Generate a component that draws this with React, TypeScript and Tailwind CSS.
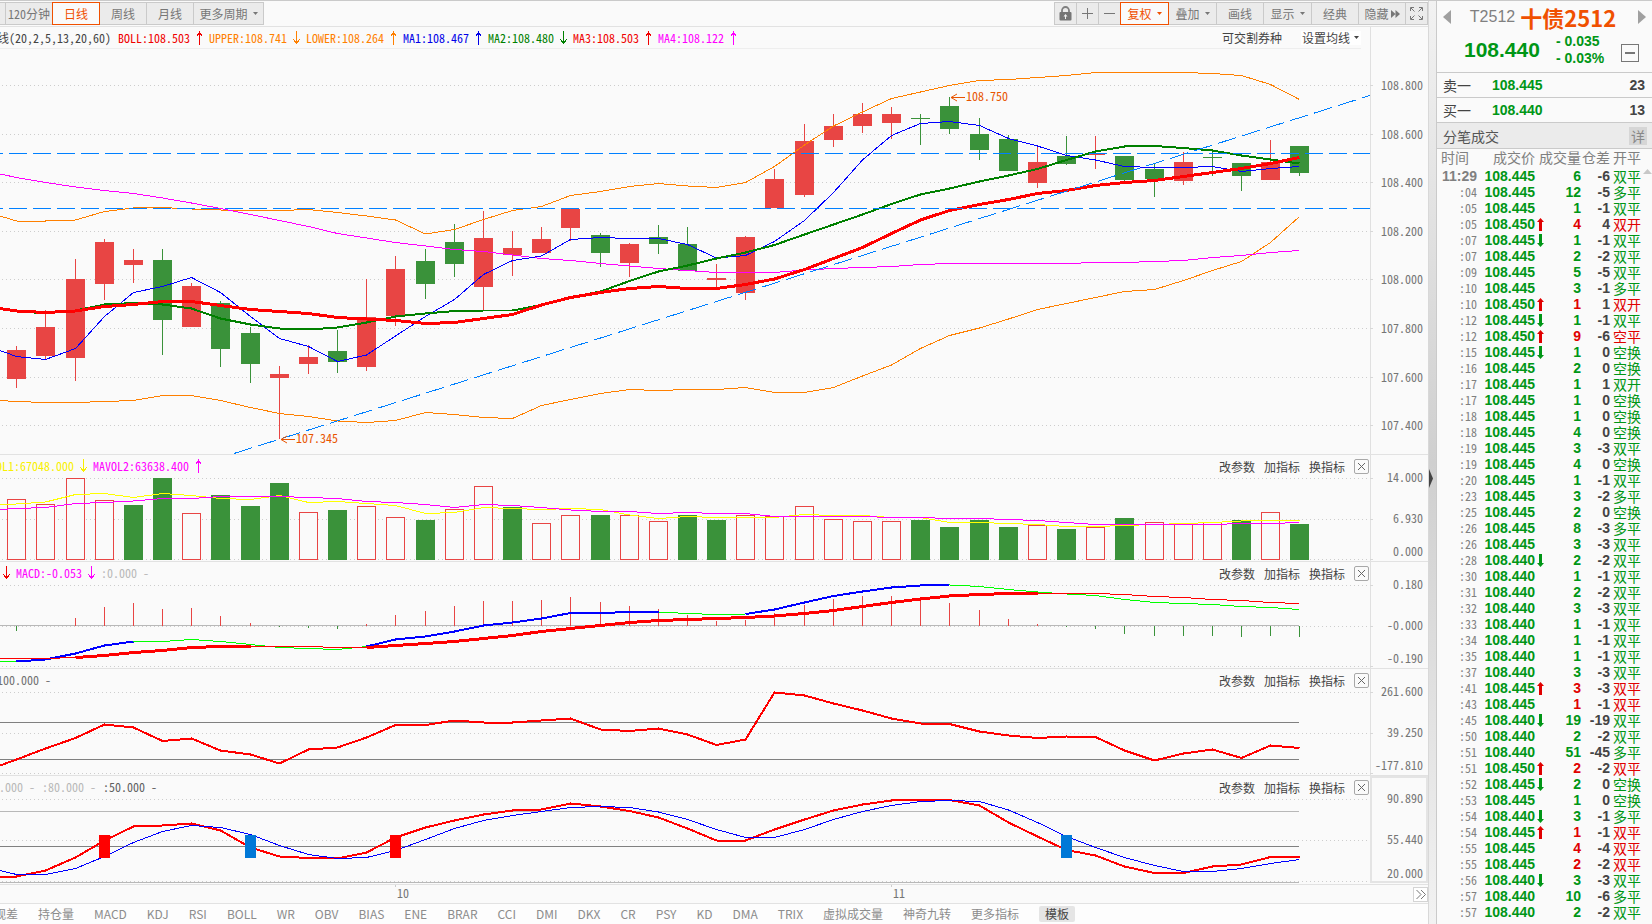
import React from "react";

const X0 = 16.5;
const STEP = 29.16;
const cx = (i: number) => Math.floor(X0 + STEP * i + 0.3) + 0.5;
const COUNT = 45;

const RED = "#e84544";
const GREEN = "#3a923a";

/* side, high, body top, body bottom, low */
type Candle = ["r" | "g", number, number, number, number];
const candles: Candle[] = [
  ["r", 346, 350, 379, 388], ["r", 310, 327, 356, 360], ["r", 259, 279, 358, 381], ["r", 239, 242, 284, 300],
  ["r", 249, 260, 265, 283], ["g", 249, 260, 320, 355], ["r", 283, 286, 327, 327], ["g", 301, 303, 349, 367],
  ["g", 327, 333, 364, 383], ["r", 366, 374, 378, 439], ["r", 345, 357, 364, 374], ["g", 330, 351, 362, 373],
  ["r", 279, 317, 367, 371], ["r", 256, 269, 316, 326], ["g", 249, 261, 284, 299], ["g", 224, 242, 264, 277],
  ["r", 211, 238, 287, 310], ["r", 231, 248, 255, 276], ["r", 227, 239, 253, 253], ["r", 208, 209, 228, 241],
  ["g", 233, 235, 253, 267], ["r", 243, 244, 263, 277], ["g", 225, 237, 244, 254], ["g", 227, 244, 271, 271],
  ["r", 264, 278, 280, 288], ["r", 236, 237, 293, 300], ["r", 169, 179, 208, 208], ["r", 124, 141, 195, 197],
  ["r", 114, 126, 140, 147], ["r", 103, 114, 126, 133], ["r", 107, 114, 123, 139], ["g", 114, 118, 119, 145],
  ["g", 97, 106, 129, 134], ["g", 118, 134, 150, 160], ["g", 135, 139, 171, 171], ["r", 147, 162, 183, 188],
  ["g", 136, 156, 164, 165], ["r", 136, 154, 155, 169], ["g", 156, 156, 180, 182], ["g", 163, 169, 179, 197],
  ["r", 152, 162, 181, 185], ["g", 150, 157, 158, 176], ["g", 163, 163, 176, 191], ["r", 140, 162, 180, 180],
  ["g", 146, 146, 173, 176],
];

/* Each series starts with its value at the left edge, then one value per bar. */
const upper = [216, 221, 221, 220, 211.5, 208, 207.5, 209, 210, 211, 210.5, 209.5, 212.5, 216, 220, 234, 229.5, 219.5, 210.5, 206.5, 195.5, 191.5, 186.5, 183.5, 186, 187.5, 182.5, 166.5, 145, 126, 112, 98.5, 92, 85.5, 80.5, 79.5, 77.5, 75.5, 72.5, 72.5, 72.5, 72.5, 73.5, 75.5, 84.5, 99.5];
const lower = [400.5, 401.5, 402.5, 402.5, 401.5, 400.5, 395.5, 395.5, 400.5, 407.5, 413.5, 416.5, 421, 422.5, 420.5, 412.5, 414.5, 417.5, 418.5, 405.5, 399.5, 393.5, 389.5, 390.5, 389.5, 389.5, 387.5, 392.5, 392.5, 387.5, 376, 365, 348.5, 335.5, 328, 319, 309.5, 303.5, 297.5, 291.5, 289.5, 280.5, 270.5, 261.5, 242.5, 216.5];
const ma1 = [350.5, 356.5, 359.5, 348.5, 316.5, 292.5, 286.5, 277.5, 292.5, 316.5, 338.5, 346.5, 361.5, 355, 336, 316.5, 299.5, 274.5, 260.5, 256, 239.5, 237.5, 238.5, 238.5, 244.5, 258, 255.5, 241.5, 220.5, 192.5, 160, 135.5, 123.5, 121.5, 125.5, 138.5, 146, 155.5, 160, 166.5, 167.5, 167.5, 166.5, 171.5, 168.5, 166.5];
const ma2 = [308.5, 311, 313.5, 310.5, 304.5, 303, 304.5, 308.5, 318.5, 324.5, 328.5, 329.5, 327.5, 322.5, 316.5, 313.5, 311, 310.5, 310.5, 305, 297.5, 291.5, 281, 271.5, 265.5, 258.5, 252.5, 245, 234.5, 224.5, 214.5, 204, 194.5, 188.5, 181.5, 175.5, 169, 160, 151.5, 146.5, 146, 148, 150.5, 155.5, 159.5, 163.5];
const ma3 = [308.5, 311, 312.5, 311, 306.5, 304.5, 301.5, 301.5, 305.5, 309.5, 311.5, 313.5, 317.5, 319, 320.5, 323.5, 322.5, 318.5, 314.5, 305, 297.5, 292.5, 288.5, 286.5, 288.5, 288.5, 284.5, 279, 269.5, 258.5, 247.5, 233.5, 220, 210.5, 204.5, 199.5, 193.5, 190.5, 185.5, 182.5, 180.5, 176.5, 172.5, 168.5, 163.5, 157.5];
const ma4 = [174, 177.5, 182.5, 187, 190.5, 193.5, 198, 203, 208.5, 214.5, 220.5, 226.5, 233.5, 238, 242.5, 246, 249.5, 251.5, 255, 258.5, 260.5, 263.5, 266, 268.5, 270.5, 272.5, 272.5, 272.5, 270, 268.5, 267.5, 266.5, 264.5, 263.5, 263.5, 263.5, 263.5, 263.5, 262.5, 262.5, 261.5, 260.5, 257.5, 255.5, 252.5, 250.5];

const volumes: ["r" | "g", number][] = [
  ["r", 499], ["r", 504], ["r", 478], ["r", 500], ["g", 505], ["g", 478], ["r", 513], ["g", 495], ["g", 506],
  ["g", 483], ["r", 512], ["g", 510], ["r", 506], ["r", 517], ["g", 520], ["r", 509], ["r", 486], ["g", 507],
  ["r", 523], ["r", 515], ["g", 515], ["r", 515], ["r", 521], ["g", 515], ["g", 520], ["r", 515], ["r", 516],
  ["r", 506], ["r", 519], ["r", 521], ["r", 521], ["g", 520], ["g", 527], ["g", 520], ["g", 527], ["r", 525],
  ["g", 529], ["r", 527], ["g", 518], ["r", 522], ["r", 523], ["r", 522], ["g", 520], ["r", 512], ["g", 524],
];
const mavol1 = [504.5, 504, 502, 494.5, 493.5, 497.5, 493.5, 495.5, 498.5, 499.5, 495.5, 502.5, 501.5, 503.5, 505.5, 513.5, 512.5, 507.5, 508.5, 509.5, 508.5, 509.5, 515, 518.5, 516.5, 517.5, 517.5, 517.5, 514.5, 515.5, 515.5, 517.5, 517.5, 522.5, 522.5, 523.5, 524.5, 526.5, 526.5, 525.5, 524.5, 523.5, 522.5, 521, 520.5, 520.5];
const mavol2 = [509.5, 508.5, 507.5, 503.5, 502.5, 501, 498.5, 498.5, 496.5, 496.5, 496.5, 497.5, 498.5, 501.5, 502.5, 504.5, 507.5, 504.5, 505.5, 507.5, 510, 511.5, 511.5, 513.5, 512.5, 513.5, 513.5, 516.5, 516.5, 516.5, 516.5, 517.5, 517.5, 518.5, 518.5, 519.5, 520.5, 522.5, 524.5, 524.5, 524.5, 524.5, 524.5, 523.5, 523.5, 522.5];

const histogram = [631, 626, 618, 607, 603, 609, 608, 616, 623, 627, 628, 629, 624, 615, 611, 606, 601, 601, 600, 597, 602, 606, 609, 615, 621, 620, 613, 605, 599, 596, 596, 599, 603, 610, 619, 624, 627, 629, 634, 636, 636, 636, 637, 636, 637];
const dif = [661.5, 661.5, 659.5, 653.5, 645.5, 641.5, 641.5, 639.5, 641.5, 644.5, 647.5, 648.5, 649.5, 646.5, 639.5, 636.5, 631.5, 625.5, 622.5, 618.5, 613, 613, 612, 612, 613.5, 614.5, 614, 609.5, 602.5, 596, 591.5, 587.5, 585.5, 585, 586.5, 589.5, 592, 594, 595.5, 599.5, 602.5, 603.5, 604.5, 606.5, 607.5, 609.5];
const dea = [658.5, 658.5, 658.5, 657.5, 655.5, 652.5, 650.5, 647.5, 646.5, 646.5, 646.5, 646.5, 647.5, 647.5, 645.5, 643.5, 641.5, 638.5, 635.5, 631.5, 628.5, 625.5, 622.5, 620.5, 619.5, 618.5, 617.5, 616, 613.5, 610.5, 606.5, 602.5, 599, 596, 594.5, 593.5, 593.5, 593.5, 593.5, 594.5, 596.5, 597.5, 599.5, 600.5, 602.5, 603.5];

const cci = [765.5, 759.5, 748.5, 738, 724.5, 727.5, 741, 738.5, 750.5, 754.5, 763.5, 749.5, 747.5, 737.5, 725, 725, 720.5, 722.5, 722.5, 720.5, 718.5, 729.5, 731, 728.5, 734.5, 745, 739.5, 692.5, 695.5, 703.5, 710.5, 718.5, 723.5, 724, 731.5, 735.5, 738, 736.5, 737, 750.5, 760.5, 753.5, 749.5, 758, 745.5, 748];

const kdK = [876.5, 876.5, 870.5, 857.5, 840.5, 826.5, 825.5, 823.5, 830.5, 847.5, 856.5, 858, 858.5, 852.5, 837.5, 827.5, 820.5, 814.5, 810.5, 809.5, 803.5, 806.5, 811, 817.5, 828.5, 840.5, 840.5, 829.5, 819.5, 810.5, 804.5, 800.5, 800, 800, 805.5, 822.5, 836.5, 850, 855.5, 866.5, 873, 873, 866.5, 864.5, 857, 857];
const kdD = [870.5, 874.5, 874.5, 868.5, 856.5, 842.5, 831.5, 825.5, 827.5, 834.5, 845.5, 854.5, 858.5, 857.5, 850.5, 839.5, 828.5, 820.5, 815.5, 811.5, 807.5, 806.5, 807.5, 812, 819.5, 829.5, 837.5, 837.5, 829.5, 819.5, 811.5, 805.5, 801.5, 800.5, 801.5, 810, 822.5, 836.5, 847.5, 857.5, 865.5, 871.5, 871.5, 868.5, 863.5, 859.5];

const MONO = "font-['Noto_Sans_Mono_CJK_SC','Liberation_Mono',monospace]";

function Line({ data, color, width = 1, from = -1, to = COUNT - 1 }: {
  data: number[]; color: string; width?: number; from?: number; to?: number;
}) {
  const pts: string[] = [];
  for (let i = from; i <= to; i++) pts.push(`${i < 0 ? 0 : cx(i)},${data[i + 1]}`);
  return (
    <polyline points={pts.join(" ")} fill="none" stroke={color} strokeWidth={width} strokeLinejoin="round" shapeRendering="crispEdges" />
  );
}

function Plot({ top, height, grid, children }: { top: number; height: number; grid: number[]; children: React.ReactNode }) {
  return (
    <svg className="block h-full w-full" viewBox={`0 ${top} 1370 ${height}`} preserveAspectRatio="none">
      {grid.map((y) => (
        <line key={y} x1="2" x2="1370" y1={y} y2={y} stroke="#cdcdcd" strokeDasharray="1 3" shapeRendering="crispEdges" />
      ))}
      {children}
    </svg>
  );
}

function Axis({ top, height, labels, ticks, boxed = false }: {
  top: number; height: number; labels: [number, string][]; ticks: number[]; boxed?: boolean;
}) {
  return (
    <svg className={`block h-full w-[58px] shrink-0 ${MONO} text-[12px]`} viewBox={`0 ${top} 58 ${height}`} fill="#757575">
      {boxed ? (
        <rect x="1" y={top + 1} width="56" height={height - 3} fill="none" stroke="#e4e4e4" strokeWidth="2" />
      ) : (
        <rect x="0" y={top} width="1" height={height} fill="#e0e0e0" />
      )}
      {ticks.map((y) => (
        <rect key={y} x="0" y={y - 0.5} width="3" height="1" fill="#d8d8d8" />
      ))}
      {labels.map(([y, t]) => (
        <text key={t} x="53" y={y + 4} textAnchor="end">{t}</text>
      ))}
    </svg>
  );
}

function Arrow({ dir, color }: { dir: "up" | "down"; color: string }) {
  return (
    <svg className="mx-[6px] h-[14px] w-[7px] shrink-0" viewBox="0 0 7 14" fill="none" stroke={color} shapeRendering="crispEdges">
      <path d={dir === "up" ? "M3.5 0V14M0.5 5.5L3.5 1.5L6.5 5.5" : "M3.5 0V13M0.5 8.5L3.5 12.5L6.5 8.5"} />
    </svg>
  );
}

type Reading = { text: string; color: string; dir?: "up" | "down" };
function Readings({ items, className }: { items: Reading[]; className: string }) {
  return (
    <div className={`flex items-center whitespace-pre text-[12px] leading-[14px] ${MONO} ${className}`}>
      {items.map((r) => (
        <React.Fragment key={r.text}>
          <span style={{ color: r.color }}>{r.text}</span>
          {r.dir ? <Arrow dir={r.dir} color={r.color} /> : <span className="w-[7px] shrink-0" />}
        </React.Fragment>
      ))}
    </div>
  );
}

function PanelHead({ children }: { children: React.ReactNode }) {
  return (
    <div className="absolute inset-x-0 top-[3px] flex h-[16px] items-center justify-between overflow-hidden pr-px">
      <div>{children}</div>
      <div className="flex items-center gap-[9px] text-[12px] leading-[15px] text-[#444]">
        <button type="button">改参数</button>
        <button type="button">加指标</button>
        <button type="button">换指标</button>
        <button type="button" aria-label="关闭" className="flex h-[15px] w-[15px] items-center justify-center rounded-[2px] border border-[#a8a8a8]">
          <svg className="h-[7px] w-[7px]" viewBox="0 0 7 7" stroke="#666" strokeWidth="1"><path d="M0 0L7 7M7 0L0 7" /></svg>
        </button>
      </div>
    </div>
  );
}

function Caret() {
  return (
    <svg className="h-[3px] w-[5px] shrink-0" viewBox="0 0 5 3" fill="currentColor"><path d="M0 0H5L2.5 3Z" /></svg>
  );
}

function Tool({ className, active = false, label, children }: {
  className: string; active?: boolean; label?: string; children?: React.ReactNode;
}) {
  const tone = active ? "z-10 border-[#f05000] bg-[#fafafa] text-[#f05000]" : "border-[#cacaca] bg-[#ebebeb] text-[#777]";
  return (
    <button type="button" aria-label={label} className={`relative -ml-px flex h-[23px] shrink-0 items-center justify-center gap-[5px] border text-[12px] leading-[16px] ${tone} ${className}`}>
      {children}
    </button>
  );
}

function Toolbar() {
  return (
    <div className="flex h-[26px] shrink-0 items-start justify-between border-b border-[#e2e2e2] pt-px">
      <div className="flex">
        <Tool className="w-[7px]" label="60分钟" />
        <Tool className="w-[48px]"><span className={MONO}>120分钟</span></Tool>
        <Tool className="w-[48px]" active>日线</Tool>
        <Tool className="w-[48px]">周线</Tool>
        <Tool className="w-[48px]">月线</Tool>
        <Tool className="w-[71px]">更多周期<Caret /></Tool>
      </div>
      <div className="flex">
        <Tool className="w-[23px]" label="锁定">
          <svg className="h-[15px] w-[13px]" viewBox="0 0 13 15">
            <path d="M3 7V4.5a3.5 3.5 0 0 1 7 0V7" fill="none" stroke="#808080" strokeWidth="1.8" />
            <rect x="0.5" y="6" width="12" height="8.5" rx="1" fill="#757575" />
            <path d="M6.500 8L8.500 10.500H7V13H6V10.500H4.500Z" fill="#f0f0f0" />
          </svg>
        </Tool>
        <Tool className="w-[23px]" label="放大">
          <svg className="h-[11px] w-[11px]" viewBox="0 0 11 11" stroke="#777" shapeRendering="crispEdges"><path d="M0 5.5H11M5.5 0V11" /></svg>
        </Tool>
        <Tool className="w-[23px]" label="缩小">
          <svg className="h-[11px] w-[11px]" viewBox="0 0 11 11" stroke="#777" shapeRendering="crispEdges"><path d="M0 5.5H11" /></svg>
        </Tool>
        <Tool className="w-[49px]" active>复权<Caret /></Tool>
        <Tool className="w-[49px]">叠加<Caret /></Tool>
        <Tool className="w-[48px]">画线</Tool>
        <Tool className="w-[49px]">显示<Caret /></Tool>
        <Tool className="w-[48px]">经典</Tool>
        <Tool className="w-[48px]">
          隐藏
          <svg className="-ml-[3px] h-[8px] w-[9px]" viewBox="0 0 9 8" fill="#777"><path d="M0 0L4.5 4L0 8ZM4.5 0L9 4L4.5 8Z" /></svg>
        </Tool>
        <Tool className="w-[23px]" label="全屏">
          <svg className="h-[13px] w-[13px]" viewBox="0 0 13 13" fill="none" stroke="#777"><path d="M.5 4V.5H4M9 .5H12.500V4M12.500 9V12.500H9M4 12.500H.5V9M1 1L4.500 4.500M12 1L8.500 4.500M1 12L4.500 8.500M12 12L8.500 8.500" /></svg>
        </Tool>
      </div>
    </div>
  );
}

function PriceMark({ x, y, text }: { x: number; y: number; text: string }) {
  return (
    <g>
      <path d={`M${x} ${y}H${x + 14}M${x + 6} ${y - 3.5}L${x} ${y}L${x + 6} ${y + 3.5}`} stroke="#e85400" fill="none" />
      <text x={x + 15} y={y + 3} fill="#e85400" className={`text-[12px] ${MONO}`}>{text}</text>
    </g>
  );
}

function MainPanel() {
  const grid = [85.5, 134.5, 182.5, 231.5, 279.5, 328.5, 377.5, 425.5];
  const labels = ["108.800", "108.600", "108.400", "108.200", "108.000", "107.800", "107.600", "107.400"];
  return (
    <section className="relative flex h-[428px] shrink-0 border-b border-[#e2e2e2]">
      <div className="relative min-w-0 flex-1">
        <Plot top={27} height={427} grid={grid}>
          {candles.map(([side, hi, t, b, lo], i) => (
            <g key={i} fill={side === "r" ? RED : GREEN} shapeRendering="crispEdges">
              <rect x={cx(i) - 0.5} y={hi} width="1" height={lo - hi} />
              <rect x={cx(i) - 9.5} y={t} width="19" height={b - t} />
            </g>
          ))}
          <Line data={upper} color="#ff8000" />
          <Line data={lower} color="#ff8000" />
          <Line data={ma4} color="#ff00ff" />
          <Line data={ma1} color="#0000ff" />
          <Line data={ma2} color="#008000" width={2} />
          <Line data={ma3} color="#ff0000" width={3} />
          <g stroke="#0080ff" fill="none" shapeRendering="crispEdges">
            <path d="M-15 153.500H1370M-15 208.500H1370" strokeDasharray="18 6" />
            <path d="M234 453.500L1370 95.500" strokeDasharray="18.900 6.260" />
          </g>
          <PriceMark x={281} y={439.5} text="107.345" />
          <PriceMark x={951} y={97.5} text="108.750" />
        </Plot>
        <div className="absolute left-0 right-[9px] top-0 flex h-[22px] items-center justify-between overflow-hidden border-b border-[#eee]">
          <div className="flex">
            <Readings className="-ml-[3px]" items={[{ text: "线(20,2,5,13,20,60)", color: "#444" }]} />
            <Readings
              className=""
              items={[
                { text: "BOLL:108.503", color: "#f00000", dir: "up" },
                { text: "UPPER:108.741", color: "#ff8000", dir: "down" },
                { text: "LOWER:108.264", color: "#ff8000", dir: "up" },
                { text: "MA1:108.467", color: "#0000e8", dir: "up" },
                { text: "MA2:108.480", color: "#008000", dir: "down" },
                { text: "MA3:108.503", color: "#f00000", dir: "up" },
                { text: "MA4:108.122", color: "#ff00ff", dir: "up" },
              ]}
            />
          </div>
          <div className="flex items-center gap-[19px] text-[12px] leading-[14px] text-[#444]">
            <button type="button">可交割券种</button>
            <button type="button" className="flex items-center gap-[4px] bg-white pl-px pr-[2px]">设置均线<Caret /></button>
          </div>
        </div>
      </div>
      <Axis top={27} height={427} ticks={grid} labels={labels.map((t, i) => [grid[i], t])} />
    </section>
  );
}

function VolumePanel() {
  const grid = [478.5, 519.5, 559.5];
  return (
    <section className="flex h-[107px] shrink-0 border-b border-[#e2e2e2]">
      <div className="relative min-w-0 flex-1">
        <Plot top={455} height={106} grid={grid}>
          {volumes.map(([side, top], i) => side === "g" ? (
            <rect key={i} x={cx(i) - 9.5} y={top} width="19" height={560 - top} fill={GREEN} shapeRendering="crispEdges" />
          ) : (
            <rect key={i} x={cx(i) - 9} y={top + 0.5} width="18" height={559 - top} fill="#fafafa" stroke={RED} shapeRendering="crispEdges" />
          ))}
          <Line data={mavol1} color="#ffff00" />
          <Line data={mavol2} color="#ff00ff" />
        </Plot>
        <PanelHead>
          <Readings className="-ml-[22px]" items={[{ text: "MAVOL1:67048.000", color: "#f8f000", dir: "down" }, { text: "MAVOL2:63638.400", color: "#ff00ff", dir: "up" }]} />
        </PanelHead>
      </div>
      <Axis top={455} height={106} ticks={grid} labels={[[478, "14.000"], [519, "6.930"], [552, "0.000"]]} />
    </section>
  );
}

function MacdPanel() {
  const grid = [585.5, 626.5, 666.5];
  return (
    <section className="flex h-[107px] shrink-0 border-b border-[#e2e2e2]">
      <div className="relative min-w-0 flex-1">
        <Plot top={562} height={106} grid={grid}>
          <rect x="0" y="625" width="1299" height="1" fill="#b8b8b8" />
          {histogram.map((y, i) => (
            <rect key={i} x={cx(i) - 0.5} y={Math.min(y, 626)} width="1" height={Math.abs(y - 626)} fill={y > 626 ? GREEN : RED} />
          ))}
          <Line data={dif} color="#00ff00" />
          <Line data={dif} color="#0000ff" width={2} from={0} to={4} />
          <Line data={dif} color="#0000ff" width={2} from={12} to={22} />
          <Line data={dif} color="#0000ff" width={2} from={25} to={32} />
          <Line data={dea} color="#ff0000" />
          <Line data={dea} color="#ff0000" width={3} from={2} to={8} />
          <Line data={dea} color="#ff0000" width={3} from={12} to={35} />
        </Plot>
        <PanelHead>
          <Readings className="-ml-[63px]" items={[{ text: "DEA:0.0930", color: "#f00000", dir: "down" }, { text: "MACD:-0.053", color: "#ff00ff", dir: "down" }, { text: ":0.000 -", color: "#b8b8b8" }]} />
        </PanelHead>
      </div>
      <Axis top={562} height={106} ticks={grid} labels={[[585, "0.180"], [626, "-0.000"], [659, "-0.190"]]} />
    </section>
  );
}

function CciPanel() {
  const grid = [692.5, 733.5, 773.5];
  return (
    <section className="flex h-[107px] shrink-0 border-b border-[#e2e2e2]">
      <div className="relative min-w-0 flex-1">
        <Plot top={669} height={106} grid={grid}>
          <rect x="0" y="722" width="1299" height="1" fill="#808080" />
          <rect x="0" y="759" width="1299" height="1" fill="#808080" />
          <Line data={cci} color="#ff0000" width={2} />
        </Plot>
        <PanelHead>
          <Readings className="-ml-[3px]" items={[{ text: "100.000 -", color: "#707070" }]} />
        </PanelHead>
      </div>
      <Axis top={669} height={106} ticks={grid} labels={[[692, "261.600"], [733, "39.250"], [766, "-177.810"]]} />
    </section>
  );
}

function KdPanel() {
  const grid = [799.5, 840.5, 881.5];
  return (
    <section className="flex h-[109px] shrink-0 border-b border-[#e2e2e2]">
      <div className="relative min-w-0 flex-1">
        <Plot top={776} height={108} grid={grid}>
          <rect x="0" y="811" width="1299" height="1" fill="#b8b8b8" />
          <rect x="0" y="846" width="1299" height="1" fill="#808080" />
          <rect x="0" y="882" width="1299" height="1" fill="#b8b8b8" />
          <Line data={kdK} color="#ff0000" width={2} />
          <Line data={kdD} color="#0000ff" />
          {[3, 13].map((i) => <rect key={i} x={cx(i) - 5.5} y="835" width="11" height="23" fill="#ff0000" />)}
          {[8, 36].map((i) => <rect key={i} x={cx(i) - 5.5} y="835" width="11" height="23" fill="#0078d7" />)}
        </Plot>
        <PanelHead>
          <Readings className="-ml-[19px]" items={[{ text: ":20.000 -", color: "#b8b8b8" }, { text: ":80.000 -", color: "#b8b8b8" }, { text: ":50.000 -", color: "#606060" }]} />
        </PanelHead>
      </div>
      <Axis top={776} height={108} boxed ticks={[]} labels={[[799, "90.890"], [840, "55.440"], [874, "20.000"]]} />
    </section>
  );
}

function DateAxis() {
  return (
    <div className="flex h-[19px] shrink-0 items-center justify-between border-b border-[#e2e2e2]">
      <svg className={`h-[18px] min-w-0 flex-1 text-[12px] ${MONO}`} viewBox="0 0 1413 18" preserveAspectRatio="none" fill="#757575">
        <path d="M395 0h1v2h-1zM891 0h1v2h-1z" fill="#ccc" />
        <text x="397" y="13">10</text>
        <text x="893" y="13">11</text>
      </svg>
      <button type="button" aria-label="更多" className="flex h-[15px] w-[15px] shrink-0 items-center justify-center border border-[#d4d4d4] bg-white">
        <svg className="h-[9px] w-[10px]" viewBox="0 0 10 9" fill="none" stroke="#777"><path d="M.5 0L5 4.500L.5 9M5 0L9.500 4.500L5 9" /></svg>
      </button>
    </div>
  );
}

const indicators = ["持仓量", "MACD", "KDJ", "RSI", "BOLL", "WR", "OBV", "BIAS", "ENE", "BRAR", "CCI", "DMI", "DKX", "CR", "PSY", "KD", "DMA", "TRIX", "虚拟成交量", "神奇九转", "更多指标"];

function IndicatorTabs() {
  return (
    <nav className="flex min-h-0 flex-1 items-center gap-[20px] overflow-hidden whitespace-nowrap bg-[#fdfdfd] text-[12px] leading-[16px] text-[#8c8c8c]">
      <button type="button" className="-ml-[18px]">主观差</button>
      {indicators.map((t) => <button type="button" key={t}>{t}</button>)}
      <button type="button" className="rounded-[2px] bg-[#e5e5e5] px-[6px] text-[#444]">模板</button>
    </nav>
  );
}

/* time, price, direction, volume, open-interest change, kind, red */
type Tick = [string, string, "" | "u" | "d", number, number, string, boolean?];
const A = "108.445";
const B = "108.440";
const C = "108.450";
const trades: Tick[] = [
  ["11:29", A, "", 6, -6, "双平"], [":04", A, "", 12, -5, "多平"], [":05", A, "", 1, -1, "双平"],
  [":05", C, "u", 4, 4, "双开", true], [":07", A, "d", 1, -1, "双平"], [":07", A, "", 2, -2, "双平"],
  [":09", A, "", 5, -5, "双平"], [":10", A, "", 3, -1, "多平"], [":10", C, "u", 1, 1, "双开", true],
  [":12", A, "d", 1, -1, "双平"], [":12", C, "u", 9, -6, "空平", true], [":15", A, "d", 1, 0, "空换"],
  [":16", A, "", 2, 0, "空换"], [":17", A, "", 1, 1, "双开"], [":17", A, "", 1, 0, "空换"],
  [":18", A, "", 1, 0, "空换"], [":18", A, "", 4, 0, "空换"], [":19", A, "", 3, -3, "双平"],
  [":19", A, "", 4, 0, "空换"], [":20", A, "", 1, -1, "双平"], [":23", A, "", 3, -2, "多平"],
  [":25", A, "", 2, 0, "空换"], [":26", A, "", 8, -3, "多平"], [":26", A, "", 3, -3, "双平"],
  [":28", B, "d", 2, -2, "双平"], [":30", B, "", 1, -1, "双平"], [":31", B, "", 2, -2, "双平"],
  [":32", B, "", 3, -3, "双平"], [":33", B, "", 1, -1, "双平"], [":34", B, "", 1, -1, "双平"],
  [":35", B, "", 1, -1, "双平"], [":37", B, "", 3, -3, "双平"], [":41", A, "u", 3, -3, "双平", true],
  [":43", A, "", 1, -1, "双平", true], [":45", B, "d", 19, -19, "双平"], [":50", B, "", 2, -2, "双平"],
  [":51", B, "", 51, -45, "多平"], [":51", C, "u", 2, -2, "双平", true], [":52", A, "d", 2, 0, "空换"],
  [":53", A, "", 1, 0, "空换"], [":54", B, "d", 3, -1, "多平"], [":54", A, "u", 1, -1, "双平", true],
  [":55", A, "", 4, -4, "双平", true], [":55", A, "", 2, -2, "双平", true], [":56", B, "d", 3, -3, "双平"],
  [":57", B, "", 10, -6, "多平"], [":57", B, "", 2, -2, "双平"],
];

function TickArrow({ dir }: { dir: "u" | "d" }) {
  return dir === "u" ? (
    <svg className="ml-[2px] block h-[13px] w-[7px]" viewBox="0 0 7 13" fill="#e00000"><path d="M3.500 0L7 4H5V13H2V4H0Z" /></svg>
  ) : (
    <svg className="ml-[2px] block h-[13px] w-[7px]" viewBox="0 0 7 13" fill="#009616"><path d="M3.500 13L7 9H5V0H2V9H0Z" /></svg>
  );
}

const NUM = "font-['Liberation_Sans',sans-serif] font-bold";

function QuotePanel() {
  return (
    <aside className="flex w-[216px] shrink-0 flex-col overflow-hidden border-l border-[#cacaca]">
      <div className="flex h-[32px] shrink-0 items-center px-[6px]">
        <button type="button" aria-label="上一个"><svg className="h-[14px] w-[8px]" viewBox="0 0 8 14" fill="#a0a0a0"><path d="M8 0V14L0 7Z" /></svg></button>
        <h1 className="flex flex-1 items-center justify-center gap-[5px] pr-[3px]">
          <span className="font-['Liberation_Sans',sans-serif] text-[16px] leading-[20px] text-[#808080]">T2512</span>
          <span className="text-[22px] font-bold leading-[28px] text-[#f05000]">十债2512</span>
        </h1>
        <button type="button" aria-label="下一个"><svg className="h-[14px] w-[8px]" viewBox="0 0 8 14" fill="#a0a0a0"><path d="M0 0V14L8 7Z" /></svg></button>
      </div>
      <div className="flex h-[40px] shrink-0 items-center border-b border-[#cacaca] pb-[6px] pl-[27px] pr-[13px]">
        <span className={`${NUM} text-[21px] leading-[24px] text-[#009616]`}>108.440</span>
        <div className={`${NUM} ml-[16px] flex-1 text-[14px] leading-[17px] text-[#009616]`}>
          <div>- 0.035</div>
          <div>- 0.03%</div>
        </div>
        <button type="button" aria-label="收起" className="mt-[6px] flex h-[18px] w-[18px] items-center justify-center border border-[#777]">
          <span className="h-[2px] w-[10px] bg-[#777]" />
        </button>
      </div>
      {[["卖一", "108.445", "23"], ["买一", "108.440", "13"]].map(([k, p, n]) => (
        <div key={k} className="flex h-[25px] shrink-0 items-center border-b border-[#cacaca] pl-[6px] pr-[7px] text-[14px] leading-[20px] text-[#444]">
          <span className="w-[49px]">{k}</span>
          <span className={`${NUM} flex-1 text-[#009616]`}>{p}</span>
          <span className={NUM}>{n}</span>
        </div>
      ))}
      <div className="flex h-[26px] shrink-0 items-center justify-between border-b border-[#cacaca] bg-[#ebebeb] pl-[6px] pr-[5px] text-[14px] leading-[18px] text-[#555]">
        <h2>分笔成交</h2>
        <button type="button" className="h-[18px] w-[18px] bg-[#d6d6d6] text-center text-[#888]">详</button>
      </div>
      <div className="relative min-h-0 flex-1">
        <svg className="absolute right-0 top-[20px] h-[5px] w-[9px]" viewBox="0 0 9 5" fill="#c8c8c8"><path d="M4.500 0L9 5H0Z" /></svg>
        <table className="w-full table-fixed border-collapse text-[14px] text-[#808080]">
          <colgroup>
            <col className="w-[40px]" /><col className="w-[58px]" /><col className="w-[12px]" /><col className="w-[34px]" /><col className="w-[29px]" /><col />
          </colgroup>
          <thead>
            <tr className="h-[19px] whitespace-nowrap align-top leading-[16px]">
              <th className="p-0 pl-[4px] text-left font-normal">时间</th>
              <th className="p-0 text-right font-normal">成交价</th>
              <th className="p-0 text-right font-normal" colSpan={2}>成交量</th>
              <th className="p-0 text-right font-normal">仓差</th>
              <th className="p-0 pl-[3px] text-left font-normal">开平</th>
            </tr>
          </thead>
          <tbody>
            {trades.map(([time, price, dir, vol, diff, kind, red], i) => (
              <tr key={i} className="h-[16px] whitespace-nowrap leading-[16px]">
                <td className={i === 0 ? `p-0 text-right ${NUM}` : `p-0 text-right text-[12px] ${MONO}`}>{time}</td>
                <td className={`p-0 text-right text-[#009616] ${NUM}`}>{price}</td>
                <td className="p-0">{dir && <TickArrow dir={dir} />}</td>
                <td className={`p-0 text-right ${NUM} ${red ? "text-[#e00000]" : "text-[#009616]"}`}>{vol}</td>
                <td className={`p-0 text-right text-[#444] ${NUM}`}>{diff}</td>
                <td className={`p-0 pl-[3px] ${red ? "text-[#e00000]" : "text-[#009616]"}`}>{kind}</td>
              </tr>
            ))}
          </tbody>
        </table>
      </div>
    </aside>
  );
}

export default function App() {
  return (
    <div className="flex h-screen overflow-hidden border-t border-[#cacaca] bg-[#fafafa] font-['Noto_Sans_CJK_SC',sans-serif]">
      <main className="flex min-w-0 flex-1 flex-col overflow-hidden border-r border-[#d8d8d8]">
        <Toolbar />
        <MainPanel />
        <VolumePanel />
        <MacdPanel />
        <CciPanel />
        <KdPanel />
        <DateAxis />
        <IndicatorTabs />
      </main>
      <div className="flex w-[7px] shrink-0 items-center bg-linear-to-b from-[#f2f2f2] via-[#cfcfcf] to-[#f2f2f2] pt-[32px]">
        <svg className="h-[19px] w-[4px]" viewBox="0 0 4 19" fill="#444"><path d="M0 0L4 9.500L0 19Z" /></svg>
      </div>
      <QuotePanel />
    </div>
  );
}
